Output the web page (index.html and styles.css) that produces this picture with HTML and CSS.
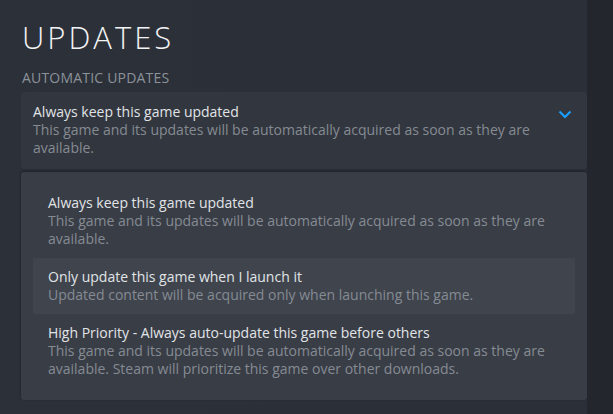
FILE: index.html
```html
<!DOCTYPE html>
<html>
<head>
<meta charset="utf-8">
<link rel="stylesheet" href="styles.css">
</head>
<body>
<div class="page">
  <main class="content">
    <h1 class="title">UPDATES</h1>
    <div class="section-label">AUTOMATIC UPDATES</div>
    <div class="select">
      <div class="select-text">
        <div class="opt-title">Always keep this game updated</div>
        <div class="opt-desc">This game and its updates will be automatically acquired as soon as they are available.</div>
      </div>
      <svg class="chevron" width="14" height="9" viewBox="0 0 14 9"><path d="M1.5 1.5 L7 7 L12.5 1.5" fill="none" stroke="#1a9fff" stroke-width="2.2"/></svg>
    </div>
    <div class="menu">
      <div class="menu-item">
        <div class="opt-title">Always keep this game updated</div>
        <div class="opt-desc">This game and its updates will be automatically acquired as soon as they are available.</div>
      </div>
      <div class="menu-item hover">
        <div class="opt-title">Only update this game when I launch it</div>
        <div class="opt-desc">Updated content will be acquired only when launching this game.</div>
      </div>
      <div class="menu-item">
        <div class="opt-title">High Priority - Always auto-update this game before others</div>
        <div class="opt-desc">This game and its updates will be automatically acquired as soon as they are available. Steam will prioritize this game over other downloads.</div>
      </div>
    </div>
  </main>
  <div class="gutter"></div>
</div>
</body>
</html>
```

FILE: styles.css
```css
html, body {
  margin: 0;
  padding: 0;
  height: 100%;
}
body {
  background: #2a2d34;
  font-family: "Open Sans", "Noto Sans", sans-serif;
  overflow: hidden;
}
.page {
  display: flex;
  height: 414px;
}
.content {
  width: 566px;
  padding: 0 0 0 21px;
  background: linear-gradient(90deg, #2c3038 0%, #2b2f37 100%);
}
.gutter {
  flex: 1;
  background: #23262d;
}
.title {
  margin: 0;
  padding-top: 17px;
  padding-left: 1px;
  font-size: 31px;
  line-height: 40px;
  font-weight: 300;
  letter-spacing: 3px;
  color: #f2f3f5;
}
.section-label {
  margin-top: 12px;
  padding-left: 1px;
  font-size: 14px;
  line-height: 18px;
  color: #8b929a;
  letter-spacing: 0.2px;
}
.select {
  margin-top: 5px;
  background: #32363e;
  border-radius: 3px;
  padding: 11px 12px 12px 12px;
  display: flex;
  align-items: flex-start;
}
.select-text {
  flex: 1;
}
.chevron {
  margin-top: 7px;
  margin-right: 3px;
}
.opt-title {
  font-size: 14px;
  line-height: 18px;
  color: #e1e4e7;
}
.opt-desc {
  font-size: 14px;
  line-height: 18px;
  color: #858b93;
}
.menu {
  margin-top: 3px;
  background: #393d46;
  border-radius: 3px;
  padding: 12px;
  box-shadow: 0 -1px 3px rgba(0,0,0,0.35);
}
.menu-item {
  padding: 10px 15px;
}
.menu-item.hover {
  background: #3f444d;
}
```
